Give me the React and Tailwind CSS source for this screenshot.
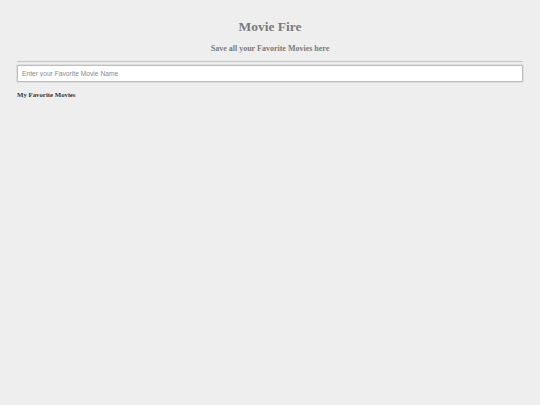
export default function App() {
  return (
    <div className="min-h-[405px] bg-[#eeeeee] px-[17px] pt-[18px]">
      <h1 className="text-center font-bold text-[13.5px] leading-[18px] text-[#7b7b7b] [font-family:'Liberation_Serif',serif]">
        Movie Fire
      </h1>
      <h3 className="mt-[7px] text-center font-bold text-[8px] leading-[12px] text-[#7b7b7b] [font-family:'Liberation_Serif',serif]">
        Save all your Favorite Movies here
      </h3>
      <hr className="mt-[6px] border-0 border-t border-[#c4c4c4]" />
      <input
        type="text"
        placeholder="Enter your Favorite Movie Name"
        className="mt-[3px] block h-[17px] w-full rounded-[1px] border border-[#bdbdbd] bg-white px-[4px] text-[6.7px] outline-none shadow-[0_0_0_1px_#dedede] placeholder:text-[#8a8a8a] [font-family:'Liberation_Sans',sans-serif]"
      />
      <h4 className="mt-[8px] font-bold text-[6.8px] leading-[10px] text-[#333333] [font-family:'Liberation_Serif',serif]">
        My Favorite Movies
      </h4>
    </div>
  );
}
